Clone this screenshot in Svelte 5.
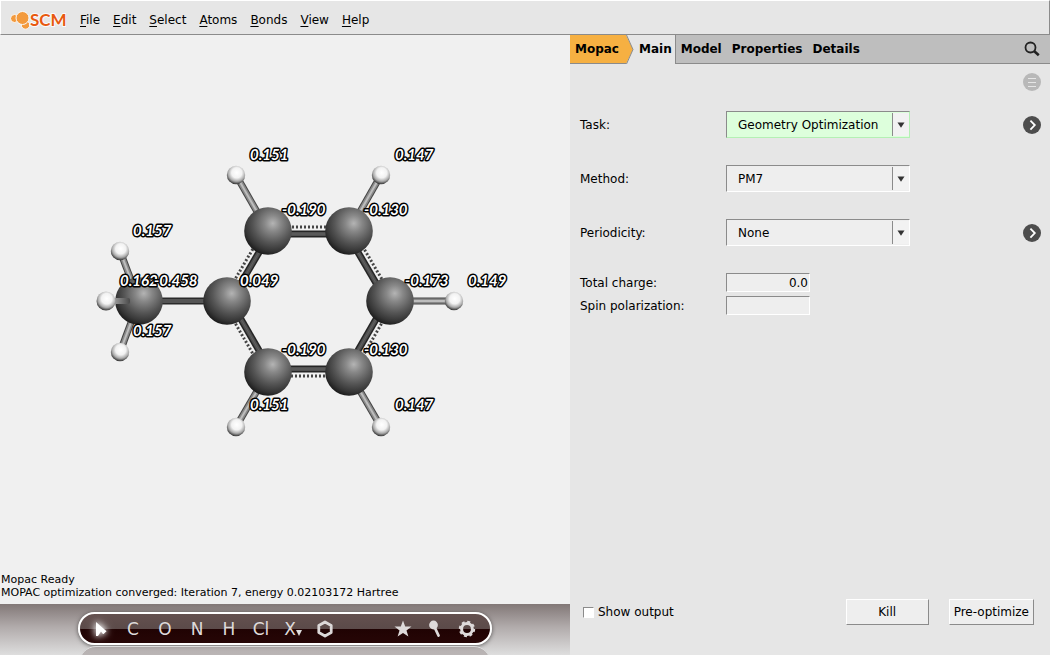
<script lang="ts">
  type Point = { x: number; y: number };

  const menus = ["File", "Edit", "Select", "Atoms", "Bonds", "View", "Help"];
  const tabs = ["Model", "Properties", "Details"];
  const elements = ["C", "O", "N", "H", "Cl"];

  const ring: Point[] = [
    { x: 268, y: 231 },
    { x: 349, y: 231 },
    { x: 390, y: 301 },
    { x: 349, y: 372 },
    { x: 268, y: 372 },
    { x: 227, y: 301 },
  ];
  const center = { x: 308.5, y: 301 };
  const methyl = { x: 139, y: 301 };

  const hydrogens = [
    { x: 236, y: 175, to: ring[0] },
    { x: 381, y: 175, to: ring[1] },
    { x: 454, y: 301, to: ring[2] },
    { x: 381, y: 427, to: ring[3] },
    { x: 236, y: 427, to: ring[4] },
    { x: 120, y: 251, to: methyl },
    { x: 120, y: 352, to: methyl },
  ];

  // partial charges, placed at the lower left of each number
  const charges = [
    { x: 250, y: 160, q: "0.151" },
    { x: 395, y: 160, q: "0.147" },
    { x: 282, y: 215, q: "-0.190" },
    { x: 364, y: 215, q: "-0.130" },
    { x: 133, y: 236, q: "0.157" },
    { x: 120, y: 286, q: "0.162" },
    { x: 154, y: 286, q: "-0.458" },
    { x: 240, y: 286, q: "0.049" },
    { x: 405, y: 286, q: "-0.173" },
    { x: 468, y: 286, q: "0.149" },
    { x: 133, y: 336, q: "0.157" },
    { x: 282, y: 355, q: "-0.190" },
    { x: 364, y: 355, q: "-0.130" },
    { x: 250, y: 410, q: "0.151" },
    { x: 395, y: 410, q: "0.147" },
  ];

  // move a ring bond towards (negative) or away from the ring center
  function shifted(a: Point, b: Point, by: number) {
    const mx = (a.x + b.x) / 2 - center.x;
    const my = (a.y + b.y) / 2 - center.y;
    const len = Math.hypot(mx, my);
    const dx = (mx / len) * by;
    const dy = (my / len) * by;
    return { x1: a.x + dx, y1: a.y + dy, x2: b.x + dx, y2: b.y + dy };
  }

  const ringBonds = ring.map((a, i) => {
    const b = ring[(i + 1) % ring.length];
    return { solid: shifted(a, b, -3), dotted: shifted(a, b, 4) };
  });

  let task = $state("Geometry Optimization");
  let method = $state("PM7");
  let periodicity = $state("None");
  let charge = $state("0.0");
  let spin = $state("");
  let showOutput = $state(false);
</script>

{#snippet more(label: string)}
  <button class="round" type="button" aria-label={label}>
    <svg viewBox="0 0 18 18" width="18" height="18">
      <circle cx="9" cy="9" r="9" fill="#4d4d4d" />
      <path d="M7.4 4.6 11.800 9 7.4 13.600" fill="none" stroke="#fff" stroke-width="1.8" />
    </svg>
  </button>
{/snippet}

{#snippet arrow()}
  <span class="arrow">
    <svg viewBox="0 0 8 6" width="8" height="6"><path d="M.5 .5h7L4 5.8z" fill="#333" /></svg>
  </span>
{/snippet}

<div class="app">
  <nav class="menubar">
    <svg class="logo" viewBox="0 0 56 20" width="56" height="20" role="img" aria-label="SCM">
      <g fill="#f39a3d" stroke="#fafafa" stroke-width="1">
        <circle cx="4.500" cy="8.500" r="4" />
        <circle cx="15.500" cy="15" r="4.200" />
        <circle cx="12.500" cy="8" r="6.500" />
      </g>
      <text class="logo-text" x="20" y="16">SCM</text>
    </svg>
    {#each menus as name}
      <button class="menu"><u>{name[0]}</u>{name.slice(1)}</button>
    {/each}
  </nav>

  <div class="work">
    <section class="viewer">
      <svg class="molecule" viewBox="0 35 570 538" preserveAspectRatio="xMidYMid meet">
        <defs>
          <radialGradient id="carbon" cx="0.6" cy="0.34" r="0.68">
            <stop offset="0" stop-color="#b4b4b4" />
            <stop offset="0.25" stop-color="#888" />
            <stop offset="0.6" stop-color="#565656" />
            <stop offset="0.85" stop-color="#363636" />
            <stop offset="1" stop-color="#1c1c1c" />
          </radialGradient>
          <radialGradient id="hydrogen" cx="0.54" cy="0.38" r="0.62">
            <stop offset="0" stop-color="#fff" />
            <stop offset="0.45" stop-color="#f2f2f2" />
            <stop offset="0.75" stop-color="#aaa" />
            <stop offset="1" stop-color="#333" />
          </radialGradient>
          <linearGradient id="front" x1="0" x2="1">
            <stop offset="0" stop-color="#c4c4c4" />
            <stop offset="1" stop-color="#4a4a4a" />
          </linearGradient>
        </defs>

        {#each ringBonds as { solid, dotted }}
          <line {...solid} stroke="#252525" stroke-width="7" />
          <line {...solid} stroke="#505050" stroke-width="4" />
          <line {...solid} stroke="#626262" stroke-width="1" />
          <line {...dotted} stroke="#444" stroke-width="3" stroke-dasharray="2 2" />
        {/each}

        <line x1={methyl.x} y1="301" x2={ring[5].x} y2="301" stroke="#2a2a2a" stroke-width="7" />
        <line x1={methyl.x} y1="301" x2={ring[5].x} y2="301" stroke="#555" stroke-width="4" />

        {#each hydrogens as h}
          <line x1={h.x} y1={h.y} x2={h.to.x} y2={h.to.y} stroke="#444" stroke-width="7" />
          <line x1={h.x} y1={h.y} x2={h.to.x} y2={h.to.y} stroke="#898989" stroke-width="5" />
          <line x1={h.x} y1={h.y} x2={h.to.x} y2={h.to.y} stroke="#bdbdbd" stroke-width="2" />
        {/each}

        {#each [...ring, methyl] as c}
          <circle cx={c.x} cy={c.y} r="23.800" fill="url(#carbon)" />
        {/each}
        {#each hydrogens as h}
          <circle cx={h.x} cy={h.y} r="9.200" fill="url(#hydrogen)" />
        {/each}

        <rect x="106" y="298" width="24" height="6" rx="2" fill="url(#front)" />
        <circle cx="106" cy="301" r="9.500" fill="url(#hydrogen)" />

        {#each charges as c}
          <text class="charge" x={c.x} y={c.y}>{c.q}</text>
        {/each}
      </svg>

      <div class="status">
        <p>Mopac Ready</p>
        <p>MOPAC optimization converged: Iteration 7, energy 0.02103172 Hartree</p>
      </div>

      <div class="dock">
        <div class="pill" role="toolbar" aria-label="Tools">
          <button class="tool glow" aria-label="Pointer">
            <svg viewBox="0 0 14 16" width="14" height="16">
              <path d="M2 1v14h2l3-4.500L9.500 13l3-2.800z" fill="#fff" />
              <path d="M7.200 10.500l1.800 2.500 2-1.500z" fill="#fff" />
            </svg>
          </button>
          {#each elements as el}
            <button class="tool">{el}</button>
          {/each}
          <button class="tool">X<svg class="drop" viewBox="0 0 6 6" width="6" height="6"><path d="M0 0h6L3 6z" fill="#ddd" /></svg></button>
          <button class="tool" aria-label="Rings">
            <svg viewBox="0 0 18 18" width="18" height="18">
              <path d="M9 2l6.200 3.500v7L9 16l-6.200-3.500v-7z" fill="none" stroke="#dcd8d8" stroke-width="2.800" stroke-linejoin="round" />
            </svg>
          </button>
          <span class="spacer"></span>
          <button class="tool" aria-label="Favorites">
            <svg viewBox="0 0 18 18" width="18" height="18">
              <path d="M9 .5l2.200 6h6.300l-5 3.900 1.900 6.100L9 12.900l-5.400 3.600 1.900-6.100L.5 6.500h6.300z" fill="#dedada" />
            </svg>
          </button>
          <button class="tool" aria-label="Structure tool">
            <svg viewBox="0 0 18 18" width="18" height="18">
              <circle cx="7.500" cy="5" r="4.400" fill="#dedada" />
              <path d="M8.500 7 12.500 15.500" stroke="#dedada" stroke-width="2.800" stroke-linecap="round" />
            </svg>
          </button>
          <button class="tool" aria-label="Settings">
            <svg viewBox="0 0 18 18" width="18" height="18">
              <circle cx="9" cy="9" r="5.400" fill="none" stroke="#dedada" stroke-width="3" />
              <circle cx="9" cy="9" r="7.200" fill="none" stroke="#dedada" stroke-width="2" stroke-dasharray="3 2.655" />
            </svg>
          </button>
        </div>
      </div>
    </section>

    <section class="panel">
      <div class="tabs">
        <button class="tab product">
          Mopac
          <svg class="tip" viewBox="0 0 8 29" width="8" height="29">
            <path d="M0 0 7 14.500 0 29z" fill="#f6b042" />
            <path d="M.5 0 7 14.500 .5 29" fill="none" stroke="#8b8b8b" />
          </svg>
        </button>
        <button class="tab current">Main</button>
        {#each tabs as name}
          <button class="tab">{name}</button>
        {/each}
        <button class="search" aria-label="Search">
          <svg viewBox="0 0 16 16" width="16" height="16">
            <circle cx="6.500" cy="6.500" r="5" fill="none" stroke="#222" stroke-width="1.800" />
            <path d="M10 10l4.800 4.200" stroke="#222" stroke-width="2.600" />
          </svg>
        </button>
      </div>

      <form class="form" onsubmit={(e) => e.preventDefault()}>
        <div class="row tools">
          <button class="round" type="button" aria-label="Panel menu">
            <svg viewBox="0 0 18 18" width="18" height="18">
              <circle cx="9" cy="9" r="9" fill="#b8b8b8" />
              <path d="M5 5.500h8M5 9.500h8M5 13.500h8" stroke="#e6e6e6" />
            </svg>
          </button>
        </div>
        <div class="row">
          <label for="task">Task:</label>
          <div class="combo changed">
            <select id="task" bind:value={task}>
              <option>Geometry Optimization</option>
            </select>
            {@render arrow()}
          </div>
          {@render more("Task details")}
        </div>
        <div class="row">
          <label for="method">Method:</label>
          <div class="combo">
            <select id="method" bind:value={method}>
              <option>PM7</option>
            </select>
            {@render arrow()}
          </div>
        </div>
        <div class="row">
          <label for="periodicity">Periodicity:</label>
          <div class="combo">
            <select id="periodicity" bind:value={periodicity}>
              <option>None</option>
            </select>
            {@render arrow()}
          </div>
          {@render more("Periodicity details")}
        </div>
        <div class="entries">
          <div class="row">
            <label for="charge">Total charge:</label>
            <input id="charge" class="entry" bind:value={charge} />
          </div>
          <div class="row">
            <label for="spin">Spin polarization:</label>
            <input id="spin" class="entry" bind:value={spin} />
          </div>
        </div>
      </form>

      <div class="actions">
        <label class="check">
          <input type="checkbox" bind:checked={showOutput} />
          Show output
        </label>
        <button class="push">Kill</button>
        <button class="push">Pre-optimize</button>
      </div>
    </section>
  </div>
</div>

<style>
  :global(body) {
    background: #e6e6e6;
  }
  .app {
    display: flex;
    flex-direction: column;
    height: 100vh;
    font: 12px/16px "DejaVu Sans", sans-serif;
    color: #000;
    background: #e6e6e6;
  }
  button {
    font: inherit;
    color: inherit;
    background: none;
    border: 0;
    padding: 0;
    margin: 0;
  }
  svg {
    display: block;
  }

  .menubar {
    display: flex;
    align-items: center;
    gap: 1px;
    height: 35px;
    box-sizing: border-box;
    padding: 4px 9px 0;
    border: 1px solid #fff;
    border-right-color: #8b8b8b;
    border-bottom-color: #8b8b8b;
  }
  .logo {
    margin-right: 7px;
  }
  .logo-text {
    font: 700 17px Lato, sans-serif;
    fill: #e8590f;
    stroke: #fafafa;
    stroke-width: 2px;
    paint-order: stroke;
  }
  .menu {
    padding: 0 6px;
  }
  u {
    text-underline-offset: 2px;
  }

  .work {
    display: grid;
    grid-template-columns: 19fr 16fr;
    flex: 1;
    min-height: 0;
  }
  .viewer {
    display: flex;
    flex-direction: column;
    min-width: 0;
    min-height: 0;
    background: #f0f0f0;
  }
  .molecule {
    flex: 1;
    width: 100%;
    min-height: 0;
  }
  .charge {
    font: italic 700 15px Lato, sans-serif;
    fill: #fff;
    stroke: #000;
    stroke-width: 3px;
    stroke-linejoin: round;
    paint-order: stroke;
  }
  .status {
    padding: 0 1px 5px;
    font-size: 11px;
    line-height: 13px;
  }
  .status p {
    margin: 0;
  }

  .dock {
    display: flex;
    justify-content: center;
    align-items: flex-start;
    height: 51px;
    box-sizing: border-box;
    padding-top: 8px;
    overflow: hidden;
    background: linear-gradient(#827877, #b1abab 45%, #dedede);
  }
  .pill {
    position: relative;
    display: flex;
    align-items: center;
    width: 414px;
    height: 33px;
    box-sizing: border-box;
    padding: 0 7px 0 5px;
    border: 2px solid #fff;
    border-radius: 17px;
    background: linear-gradient(#64514f, #5b4a49 52%, #200303 52%, #260606);
    box-shadow: 0 1px 4px #0008;
  }
  .pill::after {
    content: "";
    position: absolute;
    left: -1px;
    right: -1px;
    top: 32px;
    height: 34px;
    border-radius: 17px;
    border: 1px solid #ddd;
    background: #a8a0a0aa;
  }
  .tool {
    display: flex;
    justify-content: center;
    align-items: center;
    width: 32px;
    font-size: 17px;
    line-height: 20px;
    color: #dedada;
  }
  .glow svg {
    filter: drop-shadow(0 0 3px #fff) drop-shadow(0 0 4px #fff8);
  }
  .drop {
    align-self: flex-end;
    margin-bottom: 3px;
  }
  .spacer {
    flex: 1;
  }

  .panel {
    display: flex;
    flex-direction: column;
    min-width: 0;
  }
  .tabs {
    display: flex;
    height: 29px;
    box-sizing: border-box;
    background: #bebebe;
    border-bottom: 1px solid #8b8b8b;
  }
  .tab {
    padding: 0 5px 1px;
    font-weight: 700;
  }
  .product {
    position: relative;
    padding-right: 7px;
    background: #f6b042;
  }
  .tip {
    position: absolute;
    left: 100%;
    top: 0;
  }
  .current {
    margin-bottom: -1px;
    padding: 0 3px 2px 13px;
    background: #e6e6e6;
    border-right: 1px solid #8b8b8b;
  }
  .search {
    margin-left: auto;
    padding-right: 10px;
  }

  .form {
    display: flex;
    flex-direction: column;
    gap: 27px;
    flex: 1;
    padding: 9px 9px 0 10px;
  }
  .row {
    display: flex;
    align-items: center;
  }
  .row label {
    width: 146px;
  }
  .tools {
    margin-bottom: -7px;
  }
  .round {
    margin-left: auto;
  }
  .combo {
    position: relative;
    width: 184px;
    height: 27px;
    box-sizing: border-box;
    background: #eee;
    border: 1px solid #8b8b8b;
    border-right-color: #fff;
    border-bottom-color: #fff;
  }
  .changed {
    background: #ddffdc;
    border-right-color: #b4f0b4;
    border-bottom-color: #b4f0b4;
  }
  select {
    appearance: none;
    width: 100%;
    height: 100%;
    padding: 0 24px 0 11px;
    font: inherit;
    color: inherit;
    background: none;
    border: 0;
  }
  .arrow {
    position: absolute;
    top: 1px;
    right: 0;
    bottom: 1px;
    display: flex;
    align-items: center;
    justify-content: center;
    width: 16px;
    background: #f2f2f2;
    border-left: 1px solid #8b8b8b;
    pointer-events: none;
  }
  .entries {
    display: flex;
    flex-direction: column;
    gap: 4px;
  }
  .entry {
    width: 84px;
    height: 19px;
    box-sizing: border-box;
    margin: 0;
    padding: 0 1px;
    font: inherit;
    text-align: right;
    background: #eee;
    border: 1px solid #8b8b8b;
    border-right-color: #fff;
    border-bottom-color: #fff;
    border-radius: 0;
  }

  .actions {
    display: flex;
    align-items: center;
    gap: 20px;
    padding: 0 16px 30px 13px;
  }
  .check {
    display: flex;
    align-items: center;
    gap: 4px;
    margin-right: auto;
  }
  .check input {
    appearance: none;
    width: 11px;
    height: 11px;
    margin: 0;
    background: #fff;
    border: 1px solid #8b8b8b;
    border-right-color: #fff;
    border-bottom-color: #fff;
  }
  .check input:checked {
    background: #444;
  }
  .push {
    min-width: 83px;
    height: 26px;
    padding: 0 4px;
    background: #eee;
    border: 1px solid #fff;
    border-right-color: #8b8b8b;
    border-bottom-color: #8b8b8b;
  }
</style>
